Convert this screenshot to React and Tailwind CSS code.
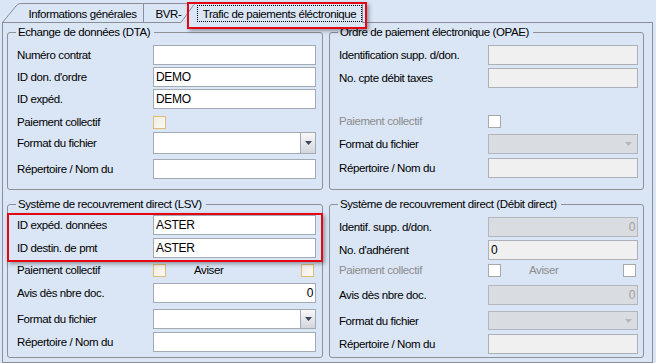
import React from 'react'

// Windows-forms style "Trafic de paiements éléctronique" tab page

const TXT = 'text-[11.5px] tracking-[-0.4px] leading-[14px]'

function Input({ value = '', right = false, kind = 'on', h = 'h-[20px]' }) {
  const look = {
    on: 'bg-white border-[#a3aab4] text-black',
    off: 'bg-[#f0f0f0] border-[#adb0b5] text-black',
    dim: 'bg-[#d9dce1] border-[#b3b6bb] text-[#a0a0a0]',
  }[kind]
  return (
    <div
      className={`${h} border ${look} flex items-center px-[2px] text-[12px] tracking-[-0.3px] leading-none ${
        right ? 'justify-end' : ''
      }`}
    >
      {value}
    </div>
  )
}

function Combo({ enabled = true, h = 'h-[21px]' }) {
  if (!enabled) {
    return (
      <div className={`${h} border border-[#b3b6bb] bg-[#d9dce1] flex items-center justify-end pr-[5px]`}>
        <svg width="7" height="4" viewBox="0 0 7 4">
          <path d="M0 0H7L3.5 4Z" fill="#b5b9bf" />
        </svg>
      </div>
    )
  }
  return (
    <div className={`${h} border border-[#a3aab4] bg-white flex`}>
      <div className="flex-1" />
      <div className="w-[15px] border-l border-[#a3aab4] bg-gradient-to-b from-[#f8f8f8] to-[#d2d6dd] flex items-center justify-center">
        <svg width="7" height="4" viewBox="0 0 7 4">
          <path d="M0 0H7L3.5 4Z" fill="#3f4757" />
        </svg>
      </div>
    </div>
  )
}

function Check({ enabled = true }) {
  return enabled ? (
    <div className="w-[13px] h-[13px] border border-[#e0bb74] bg-gradient-to-br from-[#f1ece2] to-[#fbfaf6]" />
  ) : (
    <div className="w-[13px] h-[13px] border border-[#a8a8a8] bg-white" />
  )
}

function Row({ className = '', label, labelW, muted = false, top = false, children }) {
  return (
    <div className={`flex ${className}`}>
      <div
        className={`${labelW} shrink-0 ${TXT} ${muted ? 'text-[#8c8c8c]' : 'text-black'} ${
          top ? 'self-start pt-[3px]' : 'self-center'
        }`}
      >
        {label}
      </div>
      <div className="flex-1">{children}</div>
    </div>
  )
}

function CheckRow({ className = '', labelW, enabled = true, aviser = false }) {
  const tone = enabled ? 'text-black' : 'text-[#8c8c8c]'
  return (
    <div className={`flex h-[20px] items-center ${className}`}>
      <div className={`${labelW} shrink-0 ${TXT} ${tone}`}>Paiement collectif</div>
      <div className="flex-1 flex items-center">
        <Check enabled={enabled} />
        {aviser && (
          <>
            <span className={`ml-[28px] ${TXT} ${tone}`}>Aviser</span>
            <div className="flex-1" />
            <div className="mr-[2px]">
              <Check enabled={enabled} />
            </div>
          </>
        )}
      </div>
    </div>
  )
}

function Group({ title, className = '', children }) {
  return (
    <fieldset className={`border border-[#8e9298] rounded-[3px] ${className}`}>
      <legend className={`-ml-[1px] pl-[2px] pr-[4px] ${TXT} text-black`}>{title}</legend>
      {children}
    </fieldset>
  )
}

function TabStrip() {
  return (
    <div className="relative h-[23px]">
      <svg className="absolute inset-0" width="656" height="23" viewBox="0 0 656 23">
        <path d="M2.5 22.5L16 6Q18 3.5 21 3.5H143.5V22.5" fill="none" stroke="#8a8e96" />
        <path d="M143.5 3.5H190" fill="none" stroke="#8a8e96" />
        <path d="M181 23L194 4.5Q195.5 2.5 198 2.5H362.5V23Z" fill="#dae6f6" />
        <path d="M181 22.5L194 4.5Q195.5 2.5 198 2.5H362.5V22.5" fill="none" stroke="#8a8e96" />
        <path d="M2 22.5H181M362.5 22.5H653" fill="none" stroke="#8a8e96" />
      </svg>
      <div className={`relative flex pl-[22px] ${TXT} text-black whitespace-nowrap`}>
        <div className="w-[121px] pt-[7px] text-center">Informations générales</div>
        <div className="w-[51px] pt-[7px] text-center">BVR-</div>
        <div className="ml-[3px] mt-[5px] w-[165px] h-[17px] border border-dotted border-black text-center pt-[1px]">
          Trafic de paiements éléctronique
        </div>
      </div>
    </div>
  )
}

export default function App() {
  const L = 'w-[136px]'
  const R = 'w-[149px]'
  return (
    <div className="relative w-[656px] h-[363px] overflow-hidden bg-[#dae6f6] [font-family:'Liberation_Sans',Arial,sans-serif]">
      <TabStrip />

      <div className="ml-[2px] w-[651px] h-[340px] border-x border-b border-[#8a8e96] pl-[4px] pr-[8px] pt-[2px]">
        <div className="grid grid-cols-[316px_315px] gap-x-[6px]">
          {/* ── Echange de données (DTA) ── */}
          <Group title="Echange de données (DTA)" className="h-[165px] pl-[9px] pr-[6px]">
            <Row className="mt-[6px]" label="Numéro contrat" labelW={L}>
              <Input />
            </Row>
            <Row className="mt-[2px]" label="ID don. d'ordre" labelW={L}>
              <Input value="DEMO" />
            </Row>
            <Row className="mt-[2px]" label="ID expéd." labelW={L}>
              <Input value="DEMO" />
            </Row>
            <CheckRow className="mt-[3px]" labelW={L} />
            <Row label="Format du fichier" labelW={L}>
              <Combo h="h-[22px]" />
            </Row>
            <Row className="mt-[5px]" label="Répertoire / Nom du" labelW={L} top>
              <Input />
            </Row>
          </Group>

          {/* ── Ordre de paiement électronique (OPAE) ── */}
          <Group title="Ordre de paiement électronique (OPAE)" className="h-[165px] pl-[9px] pr-[5px]">
            <Row className="mt-[6px]" label="Identification supp. d/don." labelW={R}>
              <Input kind="off" />
            </Row>
            <Row className="mt-[3px]" label="No. cpte débit taxes" labelW={R}>
              <Input kind="off" />
            </Row>
            <CheckRow className="mt-[23px]" labelW={R} enabled={false} />
            <Row className="mt-[3px]" label="Format du fichier" labelW={R}>
              <Combo enabled={false} h="h-[20px]" />
            </Row>
            <Row className="mt-[4px]" label="Répertoire / Nom du" labelW={R} top>
              <Input kind="off" />
            </Row>
          </Group>

          {/* ── Système de recouvrement direct (LSV) ── */}
          <Group title="Système de recouvrement direct (LSV)" className="mt-[7px] h-[161px] pl-[9px] pr-[6px]">
            <Row className="mt-[4px]" label="ID expéd. données" labelW={L}>
              <Input value="ASTER" />
            </Row>
            <Row className="mt-[3px]" label="ID destin. de pmt" labelW={L}>
              <Input value="ASTER" />
            </Row>
            <CheckRow className="mt-[2px]" labelW={L} aviser />
            <Row className="mt-[3px]" label="Avis dès nbre doc." labelW={L}>
              <Input value="0" right />
            </Row>
            <Row className="mt-[6px]" label="Format du fichier" labelW={L}>
              <Combo h="h-[20px]" />
            </Row>
            <Row className="mt-[3px]" label="Répertoire / Nom du" labelW={L} top>
              <Input />
            </Row>
          </Group>

          {/* ── Système de recouvrement direct (Débit direct) ── */}
          <Group title="Système de recouvrement direct (Débit direct)" className="mt-[7px] h-[161px] pl-[9px] pr-[5px]">
            <Row className="mt-[6px]" label="Identif. supp. d/don." labelW={R}>
              <Input kind="dim" value="0" right />
            </Row>
            <Row className="mt-[3px]" label="No. d'adhérent" labelW={R}>
              <Input kind="off" value="0" />
            </Row>
            <CheckRow labelW={R} enabled={false} aviser />
            <Row className="mt-[5px]" label="Avis dès nbre doc." labelW={R}>
              <Input kind="dim" value="0" right />
            </Row>
            <Row className="mt-[6px]" label="Format du fichier" labelW={R}>
              <Combo enabled={false} h="h-[19px]" />
            </Row>
            <Row className="mt-[4px]" label="Répertoire / Nom du" labelW={R} top>
              <Input kind="off" />
            </Row>
          </Group>
        </div>
      </div>

      {/* highlight boxes */}
      <div className="absolute left-[187px] top-[2px] w-[180px] h-[27px] border-2 border-[#e30613] shadow-[2px_2px_4px_rgba(0,0,0,0.35)]" />
      <div className="absolute left-[7px] top-[213px] w-[316px] h-[49px] border-2 border-[#e30613] shadow-[2px_2px_4px_rgba(0,0,0,0.35)]" />
    </div>
  )
}
